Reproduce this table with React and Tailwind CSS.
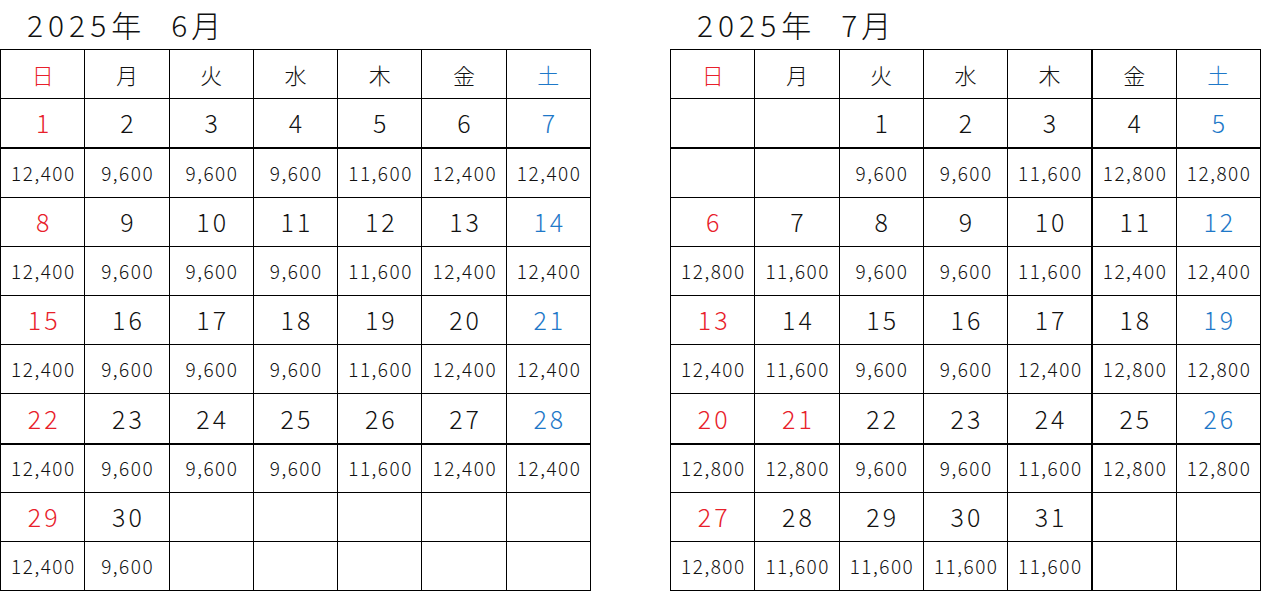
const RED = "text-[#e8202a]";
const BLUE = "text-[#1e78c8]";
const WEEK = ["日", "月", "火", "水", "木", "金", "土"];

const june = {
  title: ["2025", "年　", "6", "月"],
  weeks: [
    [[1, 2, 3, 4, 5, 6, 7], ["12,400", "9,600", "9,600", "9,600", "11,600", "12,400", "12,400"]],
    [[8, 9, 10, 11, 12, 13, 14], ["12,400", "9,600", "9,600", "9,600", "11,600", "12,400", "12,400"]],
    [[15, 16, 17, 18, 19, 20, 21], ["12,400", "9,600", "9,600", "9,600", "11,600", "12,400", "12,400"]],
    [[22, 23, 24, 25, 26, 27, 28], ["12,400", "9,600", "9,600", "9,600", "11,600", "12,400", "12,400"]],
    [[29, 30, null, null, null, null, null], ["12,400", "9,600", "", "", "", "", ""]],
  ],
  holidays: [],
};

const july = {
  title: ["2025", "年　", "7", "月"],
  weeks: [
    [[null, null, 1, 2, 3, 4, 5], ["", "", "9,600", "9,600", "11,600", "12,800", "12,800"]],
    [[6, 7, 8, 9, 10, 11, 12], ["12,800", "11,600", "9,600", "9,600", "11,600", "12,400", "12,400"]],
    [[13, 14, 15, 16, 17, 18, 19], ["12,400", "11,600", "9,600", "9,600", "12,400", "12,800", "12,800"]],
    [[20, 21, 22, 23, 24, 25, 26], ["12,800", "12,800", "9,600", "9,600", "11,600", "12,800", "12,800"]],
    [[27, 28, 29, 30, 31, null, null], ["12,800", "11,600", "11,600", "11,600", "11,600", "", ""]],
  ],
  holidays: [21],
  thickCol: 5,
};

function colour(i, day, holidays) {
  if (i === 0 || (day && holidays.includes(day))) return RED;
  if (i === 6) return BLUE;
  return "text-[#111]";
}

function Month({ data }) {
  const cellBase = "border border-black text-center p-0";
  const left = (i) => (data.thickCol === i ? "border-l-2" : "");
  const [year, nen, month, tsuki] = data.title;
  return (
    <div className="flex flex-col w-[591px]">
      <div className="h-[49px] pl-[27px] pt-[4px] text-[30px] leading-[40px] text-[#111] flex">
        <span className="tracking-[5px]">{year}</span>
        <span>{nen}</span>
        <span className="tracking-[4px]">{month}</span>
        <span>{tsuki}</span>
      </div>
      <table className="w-[591px] table-fixed border-collapse">
        <tbody>
          <tr className="h-[49px]">
            {WEEK.map((w, i) => (
              <td key={w} className={`${cellBase} ${left(i)} text-[22px] ${colour(i, null, [])}`}>{w}</td>
            ))}
          </tr>
          {data.weeks.map(([days, prices], r) => (
            <>
              <tr key={"d" + r} className={r === 3 ? "h-[50px]" : "h-[49px]"}>
                {days.map((d, i) => (
                  <td
                    key={i}
                    className={`${cellBase} ${left(i)} text-[25px] tracking-[3px] indent-[3px] ${colour(i, d, data.holidays)} ${r === 0 || r === 3 ? "border-b-2" : ""}`}
                  >
                    {d}
                  </td>
                ))}
              </tr>
              <tr key={"p" + r} className={r === 0 ? "h-[50px]" : "h-[49px]"}>
                {prices.map((p, i) => (
                  <td key={i} className={`${cellBase} ${left(i)} text-[19px] tracking-[1.5px] indent-[1.5px] text-[#111]`}>{p}</td>
                ))}
              </tr>
            </>
          ))}
        </tbody>
      </table>
    </div>
  );
}

export default function App() {
  return (
    <div className="flex gap-[79px] bg-white w-[1262px] h-[592px] font-['Noto_Sans_CJK_JP',sans-serif] font-light">
      <Month data={june} />
      <Month data={july} />
    </div>
  );
}
